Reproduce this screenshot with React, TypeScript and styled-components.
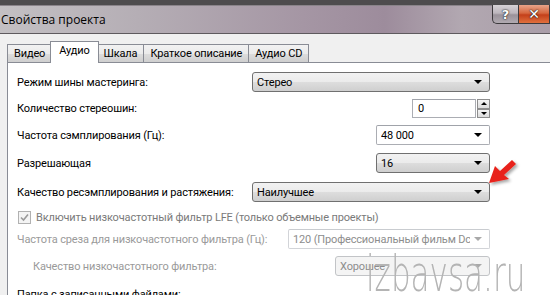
import React from "react";
import styled, { createGlobalStyle, css } from "styled-components";

const Global = createGlobalStyle`
  html, body { margin: 0; padding: 0; }
  body {
    width: 550px;
    height: 295px;
    overflow: hidden;
    background: #f0f0f0;
    font-family: Roboto, "Open Sans", "DejaVu Sans", sans-serif;
  }
`;

const Window = styled.div`
  position: relative;
  width: 550px;
  height: 295px;
  overflow: hidden;
  background: #f0f0f0;
`;

const TitleBar = styled.div`
  display: flex;
  align-items: flex-start;
  height: 28px;
  border-top: 5px solid #4e4c4e;
  border-bottom: 1px solid #5e5a5e;
  background: linear-gradient(
    90deg,
    #c3c0c3 0%,
    #b5aeb5 25%,
    #a596a4 55%,
    #9d8c9c 70%,
    #b2a8b1 84%,
    #a99da8 100%
  );
  box-shadow: inset 0 1px 0 #8a848a;
`;

const Title = styled.div`
  align-self: center;
  padding-left: 1px;
  font-family: "Open Sans", sans-serif;
  font-size: 12px;
  color: #000;
`;

const CaptionButtons = styled.div`
  display: flex;
  margin-left: auto;
  height: 19px;
`;

const CaptionButton = styled.div<{ $kind: "help" | "close" }>`
  display: flex;
  align-items: center;
  justify-content: center;
  height: 18px;
  border: 1px solid #3d3a3d;
  border-top: none;
  font-family: "DejaVu Sans", sans-serif;
  font-weight: bold;
  color: #fff;
  text-shadow: 0 0 2px #222, 0 0 1px #000;
  ${(p) =>
    p.$kind === "help"
      ? css`
          width: 25px;
          border-bottom-left-radius: 5px;
          border-right: none;
          font-size: 13px;
          background: linear-gradient(180deg, #d6d2d6 0%, #bdb6bd 45%, #9a929a 55%, #b1aab1 100%);
        `
      : css`
          width: 30px;
          font-size: 14px;
          background: linear-gradient(180deg, #e7a48a 0%, #d6673f 45%, #c4401a 55%, #e0703e 100%);
        `}
`;

const Body = styled.div`
  padding: 8px 0 0 7px;
  background: #f0f0f0;
`;

const TabStrip = styled.div`
  display: flex;
  align-items: flex-end;
  height: 21px;
  position: relative;
  z-index: 1;
  margin-bottom: -1px;
`;

const Tab = styled.div<{ $active?: boolean }>`
  box-sizing: border-box;
  display: flex;
  align-items: center;
  font-size: 11px;
  letter-spacing: -0.15px;
  color: #000;
  border: 1px solid #898c95;
  border-bottom: none;
  margin-left: -1px;
  &:first-child { margin-left: 0; }
  ${(p) =>
    p.$active
      ? css`
          height: 22px;
          padding: 0 8px 4px 8px;
          background: #fff;
          position: relative;
          z-index: 2;
          margin-left: -2px;
          margin-right: -1px;
        `
      : css`
          height: 18px;
          padding: 0 6px;
          background: linear-gradient(180deg, #f2f2f2 0%, #ebebeb 50%, #dddddd 51%, #cfcfcf 100%);
          margin-bottom: 1px;
        `}
`;

const Panel = styled.div`
  background: #fff;
  border: 1px solid #898c95;
  border-right: none;
  height: 260px;
`;

const Form = styled.div`
  display: flex;
  flex-direction: column;
  width: 473px;
  padding: 9px 0 0 9px;
`;

const Row = styled.div<{ $after: number; $h?: number; $indent?: number }>`
  display: flex;
  align-items: center;
  height: ${(p) => p.$h ?? 20}px;
  margin-bottom: ${(p) => p.$after}px;
  padding-left: ${(p) => p.$indent ?? 0}px;
`;

const Label = styled.span<{ $disabled?: boolean; $dim?: boolean }>`
  font-size: 11px;
  letter-spacing: -0.15px;
  color: ${(p) => (p.$disabled ? "#9a9a9a" : p.$dim ? "#7a7a7a" : "#000")};
  white-space: nowrap;
`;

const Combo = styled.div<{ $w: number; $variant: "button" | "edit"; $disabled?: boolean }>`
  box-sizing: border-box;
  margin-left: auto;
  width: ${(p) => p.$w}px;
  height: 20px;
  display: flex;
  align-items: center;
  padding: 0 7px 0 4px;
  font-size: 11px;
  letter-spacing: -0.15px;
  white-space: nowrap;
  overflow: hidden;
  flex: none;
  ${(p) =>
    p.$variant === "button"
      ? css`
          border: 1px solid ${p.$disabled ? "#c2c4c7" : "#707070"};
          border-radius: 3px;
          background: ${p.$disabled
            ? "#f4f4f4"
            : "linear-gradient(180deg, #f2f2f2 0%, #ebebeb 50%, #dddddd 51%, #cfcfcf 100%)"};
          color: ${p.$disabled ? "#8d8d8d" : "#000"};
        `
      : css`
          border: 1px solid ${p.$disabled ? "#d2d4d8" : "#abadb3"};
          border-top-color: ${p.$disabled ? "#c9ccd0" : "#a0a3aa"};
          border-radius: 2px;
          background: #fff;
          color: ${p.$disabled ? "#8d8d8d" : "#000"};
        `}
`;

const ComboText = styled.span`
  flex: 1;
  min-width: 0;
  overflow: hidden;
`;

const DropArrow = styled.span<{ $disabled?: boolean }>`
  width: 0;
  height: 0;
  margin-left: 4px;
  border-left: 4px solid transparent;
  border-right: 4px solid transparent;
  border-top: 4px solid ${(p) => (p.$disabled ? "#a9a9a9" : "#000")};
  flex: none;
`;

const Spin = styled.div`
  margin-left: auto;
  display: flex;
  height: 19px;
`;

const SpinInput = styled.div`
  box-sizing: border-box;
  width: 64px;
  height: 19px;
  border: 1px solid #abadb3;
  border-top-color: #a0a3aa;
  background: #fff;
  font-size: 11px;
  display: flex;
  align-items: center;
  padding-left: 5px;
`;

const SpinButtons = styled.div`
  display: flex;
  flex-direction: column;
  width: 13px;
  margin-left: 1px;
`;

const SpinButton = styled.div<{ $dir: "up" | "down" }>`
  box-sizing: border-box;
  height: 9.5px;
  border: 1px solid #8d8d8d;
  background: linear-gradient(180deg, #f4f4f4 0%, #dcdcdc 100%);
  display: flex;
  align-items: center;
  justify-content: center;
  &::after {
    content: "";
    width: 0;
    height: 0;
    border-left: 3px solid transparent;
    border-right: 3px solid transparent;
    ${(p) =>
      p.$dir === "up"
        ? css`border-bottom: 3px solid #000;`
        : css`border-top: 3px solid #000;`}
  }
`;

const CheckBox = styled.span`
  box-sizing: border-box;
  width: 13px;
  height: 13px;
  border: 1px solid #b1b1b1;
  background: #f4f4f4;
  margin: 0 5px 0 1px;
  display: flex;
  align-items: center;
  justify-content: center;
  flex: none;
`;

const Watermark = styled.div`
  position: absolute;
  left: 366px;
  top: 244px;
  font-family: "DejaVu Sans", sans-serif;
  font-weight: 200;
  font-size: 50px;
  line-height: 60px;
  color: #b4b4b4;
  white-space: nowrap;
  pointer-events: none;
  transform: scaleX(0.62);
  transform-origin: left top;
`;

const ArrowMark = styled.svg`
  position: absolute;
  left: 484px;
  top: 155px;
  pointer-events: none;
`;

export default function App() {
  return (
    <>
      <Global />
      <Window>
        <TitleBar>
          <Title>Свойства проекта</Title>
          <CaptionButtons>
            <CaptionButton $kind="help">?</CaptionButton>
            <CaptionButton $kind="close">✕</CaptionButton>
          </CaptionButtons>
        </TitleBar>
        <Body>
          <TabStrip>
            <Tab>Видео</Tab>
            <Tab $active>Аудио</Tab>
            <Tab>Шкала</Tab>
            <Tab>Краткое описание</Tab>
            <Tab>Аудио CD</Tab>
          </TabStrip>
          <Panel>
            <Form>
              <Row $after={7}>
                <Label>Режим шины мастеринга:</Label>
                <Combo $w={238} $variant="button">
                  <ComboText>Стерео</ComboText>
                  <DropArrow />
                </Combo>
              </Row>
              <Row $after={7} $h={19}>
                <Label>Количество стереошин:</Label>
                <Spin>
                  <SpinInput>0</SpinInput>
                  <SpinButtons>
                    <SpinButton $dir="up" />
                    <SpinButton $dir="down" />
                  </SpinButtons>
                </Spin>
              </Row>
              <Row $after={8}>
                <Label>Частота сэмплирования (Гц):</Label>
                <Combo $w={114} $variant="edit">
                  <ComboText>48 000</ComboText>
                  <DropArrow />
                </Combo>
              </Row>
              <Row $after={9}>
                <Label>Разрешающая</Label>
                <Combo $w={114} $variant="button">
                  <ComboText>16</ComboText>
                  <DropArrow />
                </Combo>
              </Row>
              <Row $after={9}>
                <Label>Качество ресэмплирования и растяжения:</Label>
                <Combo $w={238} $variant="button">
                  <ComboText>Наилучшее</ComboText>
                  <DropArrow />
                </Combo>
              </Row>
              <Row $after={5} $h={13}>
                <CheckBox>
                  <svg width="9" height="9" viewBox="0 0 9 9">
                    <path d="M1 4.5 L3.5 7 L8 1.5" fill="none" stroke="#9a9a9a" strokeWidth="1.6" />
                  </svg>
                </CheckBox>
                <Label $dim>Включить низкочастотный фильтр LFE (только объемные проекты)</Label>
              </Row>
              <Row $after={7}>
                <Label $disabled>Частота среза для низкочастотного фильтра (Гц):</Label>
                <Combo $w={202} $variant="edit" $disabled>
                  <ComboText>120 (Профессиональный фильм Dc</ComboText>
                  <DropArrow $disabled />
                </Combo>
              </Row>
              <Row $after={8} $indent={16}>
                <Label $disabled>Качество низкочастотного фильтра:</Label>
                <Combo $w={155} $variant="button" $disabled>
                  <ComboText>Хорошее</ComboText>
                  <DropArrow $disabled />
                </Combo>
              </Row>
              <Row $after={0}>
                <Label>Папка с записанными файлами:</Label>
              </Row>
            </Form>
          </Panel>
        </Body>
        <Watermark>izbavsa.ru</Watermark>
        <ArrowMark width="40" height="34" viewBox="0 0 40 34">
          <defs>
            <filter id="sh" x="-30%" y="-30%" width="160%" height="160%">
              <feDropShadow dx="2" dy="2" stdDeviation="1.5" floodColor="#000" floodOpacity="0.35" />
            </filter>
          </defs>
          <path
            d="M5 28 L11 11 L16 16 L28 5 L32 9 L20 20 L25 24 Z"
            fill="#e8231a"
            filter="url(#sh)"
          />
        </ArrowMark>
      </Window>
    </>
  );
}
